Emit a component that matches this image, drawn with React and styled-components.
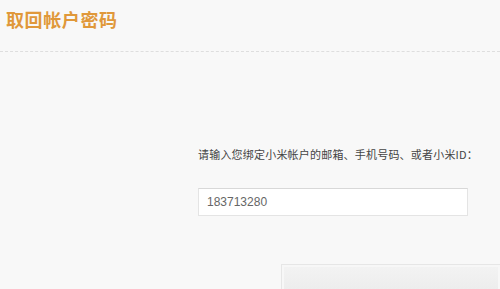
import React from "react";
import styled, { createGlobalStyle } from "styled-components";

const GlobalStyle = createGlobalStyle`
  html, body {
    margin: 0;
    padding: 0;
    background: #f8f8f8;
  }
  body {
    font-family: "Noto Sans CJK SC", "Liberation Sans", sans-serif;
  }
`;

const App = () => (
  <>
    <GlobalStyle />
    <Page>
      <Header>
        <Title>取回帐户密码</Title>
      </Header>
      <Form>
        <Label>请输入您绑定小米帐户的邮箱、手机号码、或者小米ID：</Label>
        <Input defaultValue="183713280" />
      </Form>
      <Footer>
        <ButtonBar />
      </Footer>
    </Page>
  </>
);

const Page = styled.div`
  width: 500px;
  height: 289px;
  overflow: hidden;
  background: #f8f8f8;
`;

const Header = styled.div`
  height: 52px;
  padding-left: 6px;
  border-bottom: 1px dashed #dedede;
  box-sizing: border-box;
`;

const Title = styled.h1`
  margin: 0;
  padding-top: 7px;
  color: #e0983a;
  font-family: "Noto Sans CJK SC", sans-serif;
  font-size: 18px;
  font-weight: 700;
  line-height: 24px;
  letter-spacing: 0.6px;
`;

const Form = styled.div`
  display: flex;
  flex-direction: column;
  padding: 95px 0 0 198px;
`;

const Label = styled.div`
  color: #444;
  font-size: 11px;
  line-height: 14px;
  margin-bottom: 27px;
  letter-spacing: 0.2px;
`;

const Input = styled.input`
  width: 270px;
  height: 28px;
  box-sizing: border-box;
  border: 1px solid #e4e4e4;
  border-top-color: #d8d8d8;
  background: #fff;
  padding: 0 8px;
  color: #666;
  font-family: "Liberation Sans", sans-serif;
  font-size: 12px;
  outline: none;
`;

const Footer = styled.div`
  display: flex;
  justify-content: flex-end;
  padding-top: 48px;
`;

const ButtonBar = styled.div`
  width: 219px;
  height: 30px;
  box-sizing: border-box;
  border: 1px solid #e6e6e6;
  border-right: none;
  background: linear-gradient(#f3f3f3, #ececec);
  box-shadow: inset 0 0 0 2px #f7f7f7;
`;

export default App;
